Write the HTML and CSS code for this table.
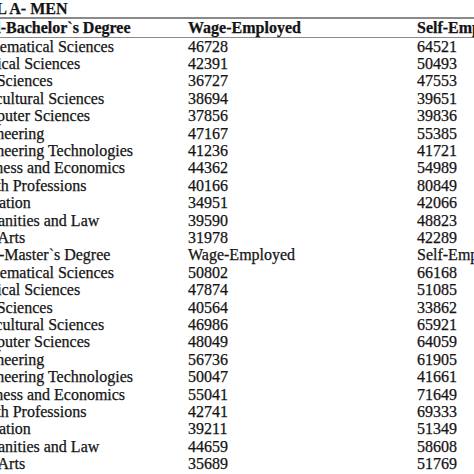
FILE: index.html
```html
<!DOCTYPE html>
<html>
<head>
<meta charset="utf-8">
<link rel="stylesheet" href="styles.css">
</head>
<body>
<div class="sheet">
  <div class="title">PANEL A- MEN</div>
  <table class="wages">
    <thead>
      <tr class="head"><th>Field-Bachelor`s Degree</th><th>Wage-Employed</th><th>Self-Employed</th></tr>
    </thead>
    <tbody>
      <tr><td>Mathematical Sciences</td><td>46728</td><td>64521</td></tr>
      <tr><td>Physical Sciences</td><td>42391</td><td>50493</td></tr>
      <tr><td>Life Sciences</td><td>36727</td><td>47553</td></tr>
      <tr><td>Agricultural Sciences</td><td>38694</td><td>39651</td></tr>
      <tr><td>Computer Sciences</td><td>37856</td><td>39836</td></tr>
      <tr><td>Engineering</td><td>47167</td><td>55385</td></tr>
      <tr><td>Engineering Technologies</td><td>41236</td><td>41721</td></tr>
      <tr><td>Business and Economics</td><td>44362</td><td>54989</td></tr>
      <tr><td>Health Professions</td><td>40166</td><td>80849</td></tr>
      <tr><td>Education</td><td>34951</td><td>42066</td></tr>
      <tr><td>Humanities and Law</td><td>39590</td><td>48823</td></tr>
      <tr><td>Fine Arts</td><td>31978</td><td>42289</td></tr>
      <tr><td>Field-Master`s Degree</td><td>Wage-Employed</td><td>Self-Employed</td></tr>
      <tr><td>Mathematical Sciences</td><td>50802</td><td>66168</td></tr>
      <tr><td>Physical Sciences</td><td>47874</td><td>51085</td></tr>
      <tr><td>Life Sciences</td><td>40564</td><td>33862</td></tr>
      <tr><td>Agricultural Sciences</td><td>46986</td><td>65921</td></tr>
      <tr><td>Computer Sciences</td><td>48049</td><td>64059</td></tr>
      <tr><td>Engineering</td><td>56736</td><td>61905</td></tr>
      <tr><td>Engineering Technologies</td><td>50047</td><td>41661</td></tr>
      <tr><td>Business and Economics</td><td>55041</td><td>71649</td></tr>
      <tr><td>Health Professions</td><td>42741</td><td>69333</td></tr>
      <tr><td>Education</td><td>39211</td><td>51349</td></tr>
      <tr><td>Humanities and Law</td><td>44659</td><td>58608</td></tr>
      <tr><td>Fine Arts</td><td>35689</td><td>51769</td></tr>
    </tbody>
  </table>
</div>
</body>
</html>
```

FILE: styles.css
```css
html, body {
  margin: 0;
  padding: 0;
  background: #fff;
  overflow: hidden;
}
body {
  font-family: "Liberation Serif", "Times New Roman", serif;
  font-size: 16px;
  color: #141414;
  width: 474px;
  height: 474px;
  -webkit-text-stroke: 0.25px #141414;
}
.sheet {
  margin-left: -34px;
  width: 560px;
}
.title {
  font-weight: bold;
  line-height: 17px;
  height: 17px;
  margin-left: -12px;
  white-space: nowrap;
}
.wages {
  border-collapse: collapse;
  border-top: 2px solid #8a8a8a;
  width: 560px;
  table-layout: fixed;
}
.wages th, .wages td {
  padding: 0;
  text-align: left;
  white-space: nowrap;
  line-height: 17.4px;
  height: 17.4px;
  vertical-align: top;
}
.wages th {
  font-weight: bold;
  line-height: 17.5px;
  height: 17.5px;
}
.wages th:first-child, .wages td:first-child { width: 222px; }
.wages th:nth-child(2), .wages td:nth-child(2) { width: 229px; }
.head {
  border-bottom: 1px solid #8a8a8a;
}
```
